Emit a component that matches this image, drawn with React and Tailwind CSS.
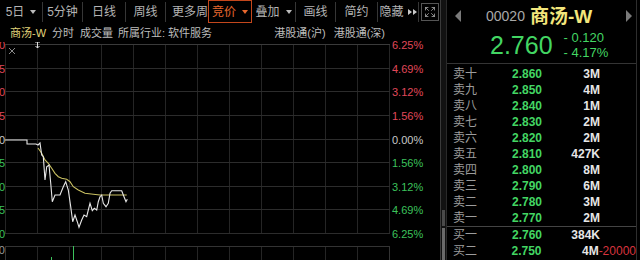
import React from "react";
import { Expand } from "lucide-react";

const sells = [
  ["卖十", "2.860", "3M"],
  ["卖九", "2.850", "4M"],
  ["卖八", "2.840", "1M"],
  ["卖七", "2.830", "2M"],
  ["卖六", "2.820", "2M"],
  ["卖五", "2.810", "427K"],
  ["卖四", "2.800", "8M"],
  ["卖三", "2.790", "6M"],
  ["卖二", "2.780", "3M"],
  ["卖一", "2.770", "2M"],
];

const buys = [
  ["买一", "2.760", "384K", ""],
  ["买二", "2.750", "4M", "-20000"],
];

const axis = [
  ["6.25%", "3.060", "text-[#e0485a]"],
  ["4.69%", "3.015", "text-[#e0485a]"],
  ["3.12%", "2.970", "text-[#e0485a]"],
  ["1.56%", "2.925", "text-[#e0485a]"],
  ["0.00%", "2.880", "text-[#c8c8c8]"],
  ["1.56%", "2.835", "text-[#3cc25c]"],
  ["3.12%", "2.790", "text-[#3cc25c]"],
  ["4.69%", "2.745", "text-[#3cc25c]"],
  ["6.25%", "2.700", "text-[#3cc25c]"],
];

const price =
  "5,140 27,140 27,144 36,144 38,145 40,143 41.7,155 43.3,156.7 45,180 46.7,166.7 49,165 50.7,183 52.3,201.7 55,195 60,195 63.3,186.7 65.7,181.7 68.3,190 70.7,206.7 72.7,221.7 75,215 77.3,221.7 79,227.3 81.7,220 84,215 86.7,216.7 88.3,210 90,203.3 92.3,210.7 94.3,208.3 96.7,210 98.3,201.7 100,196.7 101.7,195 103.3,203.3 106,206.7 108.3,203.3 110,193.3 111.7,190.7 121.7,190.7 124,196.7 126,201.7 127.3,199.3";

const avg =
  "38,148 41.7,153.3 45,160 48.3,163.3 51.7,168.3 55,173.3 58.3,176.7 61.7,178.3 66.7,179.3 70,181.7 73.3,186.7 78.3,190 85,193.3 93.3,194.3 100,195 113.3,195 126.7,195";

const Caret = ({ color = "#bbbbbb" }) => (
  <svg width="6" height="4" viewBox="0 0 6 4" className="ml-[6px]">
    <path d="M0 0 L6 0 L3 4 Z" fill={color} />
  </svg>
);

const Tab = ({ w, children, active }) => (
  <div
    className={`flex items-center justify-center shrink-0 overflow-hidden whitespace-nowrap ${w} ${
      active ? "border border-[#c4471c] text-[#e8682e]" : "text-[#b4b4b4]"
    }`}
  >
    {children}
  </div>
);

const Sep = () => <div className="w-px bg-[#363636] my-[2px] shrink-0" />;

const Chart = () => {
  const hLines = Array.from({ length: 9 }, (_, i) => 44 + i * 23.625);
  const vLines = Array.from({ length: 13 }, (_, i) => 5 + i * 32);
  return (
    <svg width="385" height="218" viewBox="5 42 385 218" className="shrink-0 block">
      {vLines.map((x) => (
        <line key={"v" + x} x1={x + 0.5} y1="44" x2={x + 0.5} y2="233" stroke="#252525" />
      ))}
      {vLines.map((x) => (
        <line key={"vv" + x} x1={x + 0.5} y1="246" x2={x + 0.5} y2="260" stroke="#252525" />
      ))}
      {hLines.map((y, i) => (
        <line
          key={"h" + i}
          x1="5"
          y1={Math.round(y) + 0.5}
          x2="390"
          y2={Math.round(y) + 0.5}
          stroke={i === 0 ? "#3a3a3a" : "#2c2c2c"}
        />
      ))}
      <rect x="5.5" y="246.5" width="384" height="20" fill="none" stroke="#333" />
      <line x1="73.5" y1="246" x2="73.5" y2="260" stroke="#3cc25c" />
      <line x1="51.5" y1="257" x2="51.5" y2="260" stroke="#3cc25c" />
      <polyline points={avg} fill="none" stroke="#c9c062" strokeWidth="1.1" />
      <polyline points={price} fill="none" stroke="#e8e8e8" strokeWidth="1.1" />
      <path d="M9 48 L15 54 M15 48 L9 54" stroke="#8a8a8a" strokeWidth="1" />
      <path d="M37.5 41 L37.5 48 M35.5 43 L37.5 41 L39.5 43 M35.5 46 L37.5 48 L39.5 46" stroke="#e0e0e0" strokeWidth="1" fill="none" />
    </svg>
  );
};

export default function App() {
  return (
    <div className="w-[640px] h-[260px] bg-black flex overflow-hidden font-['Liberation_Sans','Noto_Sans_CJK_SC',sans-serif]">
      {/* left: chart */}
      <div className="w-[440px] shrink-0 flex flex-col">
        <div className="h-[24px] flex text-[12px]">
          <Tab w="w-[42px]">
            5日
            <Caret />
          </Tab>
          <Sep />
          <Tab w="w-[39px]">5分钟</Tab>
          <Sep />
          <Tab w="w-[42px]">日线</Tab>
          <Sep />
          <Tab w="w-[39px]">周线</Tab>
          <Sep />
          <div className="w-[42px] shrink-0 overflow-hidden whitespace-nowrap text-[#b4b4b4] flex items-center pl-[6px]">
            更多周期
          </div>
          <div className="h-[23px] flex">
            <Tab w="w-[44px]" active>
              竞价
              <Caret color="#e8682e" />
            </Tab>
          </div>
          <Tab w="w-[43px]">
            叠加
            <Caret />
          </Tab>
          <Sep />
          <Tab w="w-[39px]">画线</Tab>
          <Sep />
          <Tab w="w-[41px]">简约</Tab>
          <Sep />
          <Tab w="w-[40px]">
            隐藏
            <svg width="9" height="6" viewBox="0 0 9 6" className="ml-[4px]">
              <path d="M0 0 L4 3 L0 6 Z M5 0 L9 3 L5 6 Z" fill="#c8c8c8" />
            </svg>
          </Tab>
          <Sep />
          <div className="flex-1 flex items-center justify-center">
            <div className="w-[18px] h-[18px] border border-[#555] flex items-center justify-center">
              <Expand size={12} color="#b0b0b0" strokeWidth={1.5} />
            </div>
          </div>
        </div>

        <div className="h-[18px] flex items-center text-[11px] text-[#bdbdbd] whitespace-nowrap">
          <span className="w-[42px] ml-[10px] text-[#e2d47a]">商汤-W</span>
          <span className="w-[28px]">分时</span>
          <span className="w-[38px]">成交量</span>
          <span>所属行业: 软件服务</span>
          <span className="ml-auto">港股通(沪)</span>
          <span className="ml-[8px] mr-[55px]">港股通(深)</span>
        </div>

        <div className="flex flex-1">
          <div className="w-[5px] shrink-0 overflow-hidden text-[11px] leading-[12px]">
            <div className="h-[201px] mt-[-3px] flex flex-col justify-between items-end">
              {axis.map(([, p, c], i) => (
                <div key={i} className={`flex justify-end whitespace-nowrap w-[5px] ${c}`}>
                  {p}
                </div>
              ))}
            </div>
            <div className="flex justify-end w-[5px] mt-[4px] text-[#9a9a9a] whitespace-nowrap">1M0</div>
          </div>
          <Chart />
          <div className="flex-1 pl-[2px] text-[11px] leading-[12px]">
            <div className="h-[201px] mt-[-3px] flex flex-col justify-between">
              {axis.map(([t, , c], i) => (
                <div key={i} className={c}>
                  {t}
                </div>
              ))}
            </div>
          </div>
        </div>
      </div>

      {/* splitter */}
      <div className="w-[7px] shrink-0 bg-[#121212] border-l border-[#3a3a3a] border-r border-r-[#2a2a2a] flex flex-col">
        <div className="h-[210px]" />
        <div className="h-[16px] bg-[#4a4a4a] mx-[1px]" />
        <div className="flex-1 bg-[#6a6a6a] mx-[1px] mt-[2px]" />
      </div>

      {/* right: quote */}
      <div className="w-[190px] shrink-0 flex flex-col border-r border-[#2e2e2e]">
        <div className="h-[64px] border-b border-[#343434] flex flex-col">
          <div className="h-[32px] flex items-center pl-[8px] pr-[4px]">
            <svg width="6" height="12" viewBox="0 0 6 12">
              <path d="M6 0 L0 6 L6 12 Z" fill="#7a7a7a" />
            </svg>
            <span className="ml-[25px] text-[14px] text-[#a8a8a8]">00020</span>
            <span className="ml-[5px] text-[19px] font-bold text-[#f2e67c] leading-none">商汤-W</span>
            <svg width="6" height="12" viewBox="0 0 6 12" className="ml-auto">
              <path d="M0 0 L6 6 L0 12 Z" fill="#7a7a7a" />
            </svg>
          </div>
          <div className="flex items-center pl-[43px] h-[26px]">
            <span className="text-[25px] leading-none text-[#43d663]">2.760</span>
            <div className="ml-[11px] flex flex-col text-[13px] leading-[15px] text-[#43d663]">
              <span>- 0.120</span>
              <span>- 4.17%</span>
            </div>
          </div>
        </div>
        <div className="pt-[2px] text-[12px]">
          <div className="border-b border-[#444]">
            {sells.map(([l, p, v]) => (
              <div key={l} className="h-[16px] flex items-center">
                <span className="w-[65px] pl-[6px] text-[#9c9c9c]">{l}</span>
                <span className="w-[50px] font-bold text-[#43d663]">{p}</span>
                <span className="w-[38px] text-right font-bold text-[#e6e6e6]">{v}</span>
              </div>
            ))}
          </div>
          {buys.map(([l, p, v, x]) => (
            <div key={l} className="h-[16px] flex items-center">
              <span className="w-[65px] pl-[6px] text-[#9c9c9c]">{l}</span>
              <span className="w-[50px] font-bold text-[#43d663]">{p}</span>
              <span className="w-[38px] text-right font-bold text-[#e6e6e6]">{v}</span>
              <span className="text-[#d8343e]">{x}</span>
            </div>
          ))}
        </div>
      </div>
    </div>
  );
}
